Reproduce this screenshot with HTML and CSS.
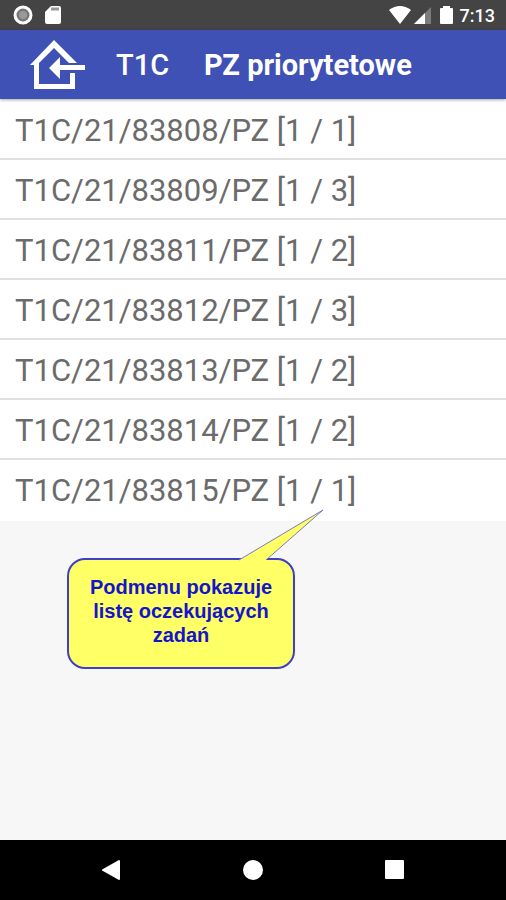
FILE: index.html
```html
<!DOCTYPE html>
<html lang="pl">
<head>
<meta charset="utf-8">
<meta name="viewport" content="width=device-width, initial-scale=1">
<title>PZ priorytetowe</title>
<link rel="stylesheet" href="styles.css">
</head>
<body>
<div class="status">
  <svg width="20" height="20" viewBox="0 0 20 20" aria-hidden="true"><circle cx="10" cy="10" r="8" fill="#777" stroke="#fff" stroke-width="3"/><circle cx="10" cy="10" r="4" fill="#999"/></svg>
  <svg width="16" height="20" viewBox="0 0 16 20" aria-hidden="true"><path d="M6 1H14Q16 1 16 3V17Q16 19 14 19H2Q0 19 0 17V7Z" fill="#fff"/><path d="M6 4H14" stroke="#999" stroke-width="3"/></svg>
  <span class="spacer"></span>
  <svg width="24" height="20" viewBox="0 0 24 20" aria-hidden="true"><path d="M1 5Q12-3 23 5L12 19Z" fill="#fff"/></svg>
  <svg width="18" height="20" viewBox="0 0 18 20" aria-hidden="true"><path d="M18 2V19H1Z" fill="#7c7c7c"/><path d="M12 8V19H1Z" fill="#fff"/></svg>
  <svg class="battery" width="13" height="20" viewBox="0 0 13 20" aria-hidden="true"><path d="M3 1H10V3H12Q13 3 13 4V18Q13 19 12 19H1Q0 19 0 18V4Q0 3 1 3H3Z" fill="#fff"/></svg>
  <span class="clock">7:13</span>
</div>
<header class="bar">
  <button class="home" type="button" aria-label="Menu">
    <svg width="56" height="51" viewBox="0 0 56 51" fill="#fff" aria-hidden="true">
      <path d="M1 25L25 0L48 23H40L25 8L10 23V44H41V33H46V49H5V25Z"/>
      <path d="M20 28L31 17V25H56V30H31V39Z"/>
    </svg>
  </button>
  <span class="code">T1C</span>
  <h1 class="title">PZ priorytetowe</h1>
</header>
<main class="content">
  <ul class="list">
    <li class="row"><a href="#83808">T1C/21/83808/PZ [1 / 1]</a></li>
    <li class="row"><a href="#83809">T1C/21/83809/PZ [1 / 3]</a></li>
    <li class="row"><a href="#83811">T1C/21/83811/PZ [1 / 2]</a></li>
    <li class="row"><a href="#83812">T1C/21/83812/PZ [1 / 3]</a></li>
    <li class="row"><a href="#83813">T1C/21/83813/PZ [1 / 2]</a></li>
    <li class="row"><a href="#83814">T1C/21/83814/PZ [1 / 2]</a></li>
    <li class="row"><a href="#83815">T1C/21/83815/PZ [1 / 1]</a></li>
  </ul>
  <p class="callout">Podmenu pokazuje listę oczekujących zadań
    <svg class="pointer" width="88" height="52" viewBox="0 0 88 52" aria-hidden="true"><path d="M0 51L84 1L27 51" fill="#ffff66" stroke="#7a7ac0"/></svg>
  </p>
</main>
<nav class="nav">
  <button type="button" aria-label="Wstecz"><svg width="20" height="22" viewBox="0 0 20 22" aria-hidden="true"><path d="M18 2V20L2 11Z" fill="#fff" stroke="#fff" stroke-width="2" stroke-linejoin="round"/></svg></button>
  <button type="button" aria-label="Ekran główny"><svg width="20" height="22" viewBox="0 0 20 22" aria-hidden="true"><circle cx="10" cy="11" r="10" fill="#fff"/></svg></button>
  <button type="button" aria-label="Ostatnie"><svg width="20" height="22" viewBox="0 0 20 22" aria-hidden="true"><rect x="0" y="1" width="19" height="19" rx="1" fill="#fff"/></svg></button>
</nav>
</body>
</html>
```
FILE: styles.css
```css
* { box-sizing: border-box; }

body {
  margin: 0;
  min-height: 100vh;
  display: flex;
  flex-direction: column;
  font-family: Roboto, "Liberation Sans", sans-serif;
  background: #f7f7f7;
}

button {
  display: flex;
  padding: 0;
  border: 0;
  background: none;
}

.status {
  display: flex;
  align-items: center;
  height: 30px;
  padding: 0 11px 0 13px;
  background: #444;
  color: #fff;
}

.status svg { flex: none; }
.status svg + svg { margin-left: 12px; }
.status .spacer { flex: 1; }
.status .spacer + svg + svg { margin-left: 1px; }
.status .battery { margin-left: 9px; }

.clock {
  margin-left: 7px;
  font-size: 18px;
  font-weight: 500;
}

.bar {
  position: relative;
  display: flex;
  align-items: center;
  height: 69px;
  padding: 1px 29px 0;
  background: #3f51b5;
  color: #fff;
  box-shadow: 0 1px 3px rgba(0, 0, 0, 0.35);
}

.code {
  margin-left: 31px;
  font-size: 29px;
  font-weight: 500;
}

.title {
  margin: 0 0 0 35px;
  font-size: 29px;
  font-weight: 700;
}

.content { flex: 1; }

.list {
  margin: 0;
  padding: 1px 0;
  list-style: none;
  background: #fff;
}

.row { border-bottom: 2px solid #e0e0e0; }

.row:last-child { border-bottom-color: transparent; }

.row a {
  display: block;
  padding: 11px 15px 7px;
  font-size: 31px;
  line-height: 40px;
  color: #6b6b6b;
  text-decoration: none;
}

.callout {
  position: relative;
  width: 228px;
  margin: 37px 67px;
  padding: 15px 16px 20px;
  border: 2px solid #3f3fc8;
  border-radius: 18px;
  background: #ffff66;
  color: #1414cc;
  font: bold 20px/24px "Liberation Sans", sans-serif;
  text-align: center;
}

.pointer {
  position: absolute;
  left: 170px;
  bottom: 100%;
  margin-bottom: -1px;
}

.nav {
  display: flex;
  justify-content: space-between;
  align-items: center;
  height: 60px;
  padding: 0 101px;
  background: #000;
}
```
